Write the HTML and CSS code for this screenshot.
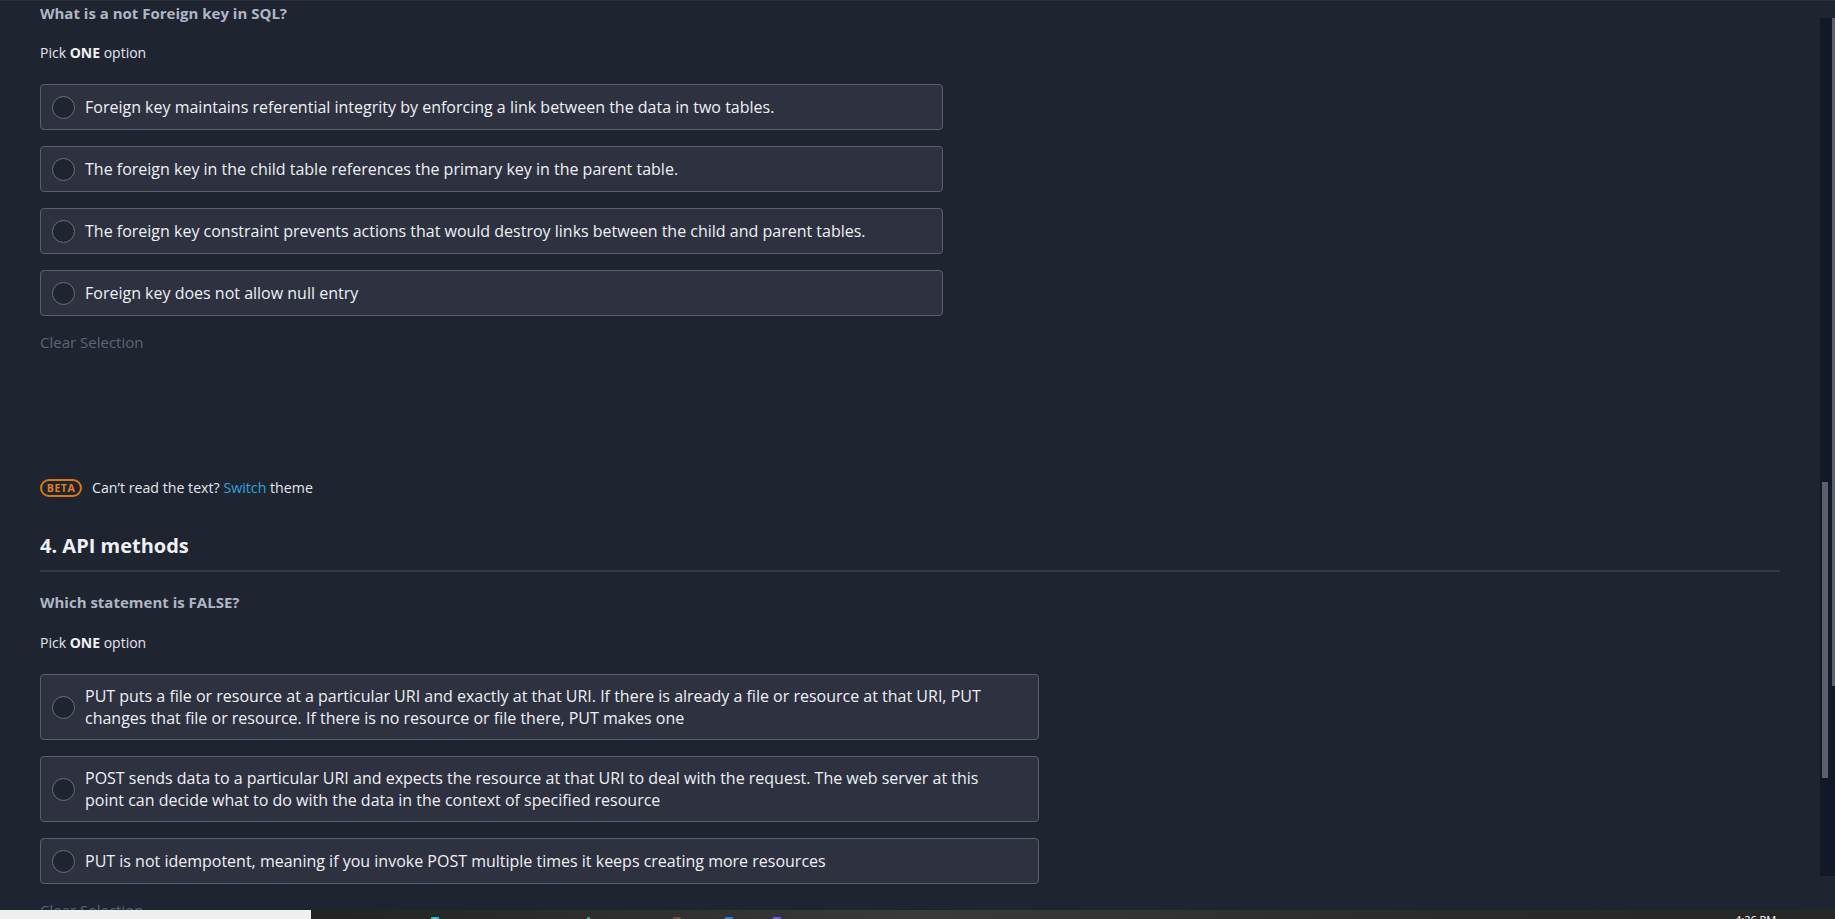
FILE: index.html
```html
<!DOCTYPE html>
<html lang="en">
<head>
<meta charset="utf-8">
<title>Assessment</title>
<link rel="stylesheet" href="styles.css">
</head>
<body>
<div class="app">
  <main class="content">
    <section class="question">
      <h3 class="q-title">What is a not Foreign key in SQL?</h3>
      <p class="pick">Pick <strong>ONE</strong> option</p>
      <ul class="options">
        <li class="option"><span class="radio"></span><span class="opt-text">Foreign key maintains referential integrity by enforcing a link between the data in two tables.</span></li>
        <li class="option"><span class="radio"></span><span class="opt-text">The foreign key in the child table references the primary key in the parent table.</span></li>
        <li class="option"><span class="radio"></span><span class="opt-text">The foreign key constraint prevents actions that would destroy links between the child and parent tables.</span></li>
        <li class="option"><span class="radio"></span><span class="opt-text">Foreign key does not allow null entry</span></li>
      </ul>
      <p class="clear">Clear Selection</p>
    </section>

    <div class="theme-note">
      <span class="beta">BETA</span>
      <span class="note-text">Can’t read the text? <a class="switch">Switch</a> theme</span>
    </div>

    <h2 class="section-title">4. API methods</h2>
    <hr class="divider">

    <section class="question">
      <h3 class="q-title">Which statement is FALSE?</h3>
      <p class="pick">Pick <strong>ONE</strong> option</p>
      <ul class="options wide">
        <li class="option"><span class="radio"></span><span class="opt-text">PUT puts a file or resource at a particular URI and exactly at that URI. If there is already a file or resource at that URI, PUT changes that file or resource. If there is no resource or file there, PUT makes one</span></li>
        <li class="option"><span class="radio"></span><span class="opt-text">POST sends data to a particular URI and expects the resource at that URI to deal with the request. The web server at this point can decide what to do with the data in the context of specified resource</span></li>
        <li class="option"><span class="radio"></span><span class="opt-text">PUT is not idempotent, meaning if you invoke POST multiple times it keeps creating more resources</span></li>
      </ul>
      <p class="clear">Clear Selection</p>
    </section>
  </main>

  <aside class="rail">
    <div class="track">
      <div class="inner-bar"><div class="inner-thumb"></div></div>
      <div class="outer-thumb"></div>
    </div>
  </aside>
</div>

<footer class="taskbar">
  <div class="search"></div>
  <div class="tray">
    <span class="ticon c1"></span>
    <span class="ticon c2"></span>
    <span class="ticon c3"></span>
    <span class="ticon c4"></span>
    <span class="ticon c5"></span>
    <span class="clock">4:26 PM</span>
  </div>
</footer>
</body>
</html>
```

FILE: styles.css
```css
* { box-sizing: border-box; }

html, body {
  margin: 0;
  padding: 0;
  height: 100%;
  background: #1f2431;
  overflow: hidden;
}

body {
  font-family: "Open Sans", "Noto Sans", sans-serif;
  color: #e6e9ef;
}

.app {
  display: flex;
  height: 919px;
  border-top: 1px solid #2a2f3b;
}

.content {
  flex: 1;
  padding: 1px 40px 0 40px;
  min-width: 0;
}

.question { margin: 0; }

.q-title {
  margin: 0;
  font-size: 15px;
  line-height: 22px;
  font-weight: 700;
  color: #aeb7c6;
}

.pick {
  margin: 19px 0 0 0;
  font-size: 14px;
  line-height: 20px;
  color: #e3e6ec;
}

.pick strong { font-weight: 700; color: #f1f3f6; }

.options {
  list-style: none;
  margin: 21px 0 0 0;
  padding: 0;
  width: 903px;
  display: flex;
  flex-direction: column;
  gap: 16px;
}

.options.wide { width: 999px; gap: 16px; }

.option {
  display: flex;
  align-items: center;
  gap: 10px;
  padding: 10px 24px 10px 10px;
  min-height: 46px;
  background: #2e3240;
  border: 1px solid #5a5f6c;
  border-radius: 4px;
}

.radio {
  flex: none;
  width: 23px;
  height: 23px;
  margin-left: 1px;
  border-radius: 50%;
  border: 1px solid #6a6f7c;
  background: #1f2431;
}

.opt-text {
  font-size: 16px;
  line-height: 22px;
  color: #eef0f4;
}

.clear {
  margin: 16px 0 0 0;
  font-size: 15px;
  line-height: 20px;
  color: #5d6577;
}

.theme-note {
  display: flex;
  align-items: center;
  gap: 10px;
  margin-top: 126px;
  height: 20px;
}

.beta {
  display: inline-flex;
  align-items: center;
  justify-content: center;
  width: 42px;
  height: 18px;
  border: 2px solid #d8780f;
  border-radius: 9px;
  font-size: 10.5px;
  font-weight: 700;
  letter-spacing: 0.5px;
  color: #e0821a;
}

.note-text {
  font-size: 14.2px;
  line-height: 20px;
  color: #e3e6ec;
}

.switch { color: #2ba6dd; }

.section-title {
  margin: 34px 0 0 0;
  font-size: 20px;
  line-height: 28px;
  font-weight: 700;
  color: #eef1f5;
}

.divider {
  margin: 10px 0 0 0;
  border: 0;
  height: 2px;
  background: #323845;
}

.divider + .question { margin-top: 19px; }
.divider + .question .pick { margin-top: 20px; }
.divider + .question .options { margin-top: 21px; }

.rail {
  flex: none;
  width: 15px;
  padding: 17px 0 43px 0;
}

.track {
  display: flex;
  height: 100%;
  background: #111827;
  padding-left: 2px;
  gap: 4px;
}

.inner-bar {
  width: 6px;
  padding-top: 464px;
}

.inner-thumb {
  height: 296px;
  background: #5b606c;
}

.outer-thumb {
  width: 3px;
  height: 668px;
  background: #5b606c;
}

.taskbar {
  position: fixed;
  left: 0;
  right: 0;
  bottom: 0;
  height: 9px;
  display: flex;
  overflow: hidden;
}

.search {
  width: 311px;
  background: #f0f0f0;
}

.tray {
  flex: 1;
  position: relative;
  background: linear-gradient(90deg, #232323 0%, #3a3a3a 40%, #2c2c2c 70%, #262626 100%);
}

.ticon {
  position: absolute;
  top: 7px;
  width: 8px;
  height: 3px;
  border-radius: 1px;
}
.c1 { left: 120px; background: #22c3d8; }
.c2 { left: 276px; background: #5aa0a0; width: 3px; }
.c3 { left: 362px; background: #7a4a3c; }
.c4 { left: 414px; background: #2d7ee0; }
.c5 { left: 462px; background: #6d5ce8; }

.clock {
  position: absolute;
  left: 1424px;
  top: 4px;
  font-family: "Segoe UI", "Open Sans", sans-serif;
  font-size: 11px;
  line-height: 12px;
  color: #ffffff;
}
```
